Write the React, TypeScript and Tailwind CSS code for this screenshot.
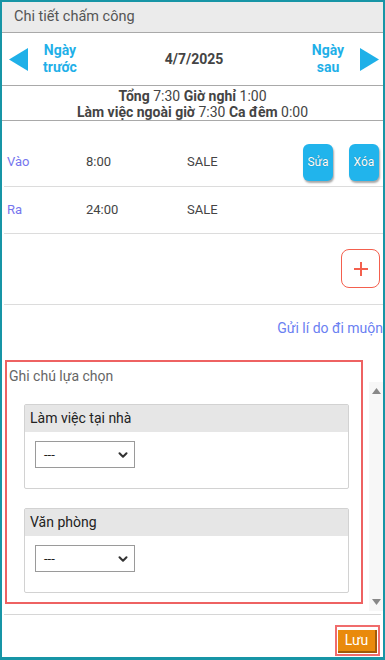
import { ChevronDown } from 'lucide-react';

const rows = [
  { kind: 'Vào', time: '8:00', dept: 'SALE', actions: true },
  { kind: 'Ra', time: '24:00', dept: 'SALE', actions: false },
];

const notes = ['Làm việc tại nhà', 'Văn phòng'];

function Triangle({ dir }: { dir: 'left' | 'right' }) {
  return (
    <svg width="19" height="23" viewBox="0 0 19 23">
      {dir === 'left' ? (
        <polygon points="19,0 19,23 0,11.5" fill="#1fb0e8" />
      ) : (
        <polygon points="0,0 0,23 19,11.5" fill="#1fb0e8" />
      )}
    </svg>
  );
}

function NoteCard({ title }: { title: string }) {
  return (
    <div className="ml-[17px] mr-[12px] border border-[#d2d2d2] rounded-[2px] bg-white">
      <div className="h-[27px] bg-[#e6e6e6] px-[5px] flex items-center text-[14px] text-[#222]">{title}</div>
      <div className="pl-[10px] pt-[9px] pb-[20px]">
        <div className="w-[100px] h-[27px] border border-[#9a9a9a] flex items-center justify-between pl-[8px] pr-[4px] text-[13px] text-[#222]">
          <span>---</span>
          <ChevronDown size={14} strokeWidth={3.5} className="text-[#333]" />
        </div>
      </div>
    </div>
  );
}

export default function App() {
  return (
    <div className="w-[385px] h-[660px] bg-white border-2 border-b-[3px] border-[#1795a6] font-['Roboto',sans-serif] flex flex-col overflow-hidden">
      {/* Header */}
      <div className="h-[31px] bg-[#ebebeb] border-b border-[#a9a9a9] flex items-center pl-[12px] text-[14.5px] text-[#555]">
        Chi tiết chấm công
      </div>

      {/* Day navigation */}
      <div className="h-[53px] border-b border-[#a9a9a9] flex items-center pl-[7px] pr-[4px]">
        <Triangle dir="left" />
        <div className="w-[64px] text-center text-[14px] font-bold leading-[17px] text-[#1fb0e8]">
          Ngày<br />trước
        </div>
        <div className="flex-1 text-center text-[14px] font-bold text-[#444]">4/7/2025</div>
        <div className="w-[64px] text-center text-[14px] font-bold leading-[17px] text-[#1fb0e8]">
          Ngày<br />sau
        </div>
        <Triangle dir="right" />
      </div>

      {/* Summary */}
      <div className="h-[35px] border-b border-[#a9a9a9] flex flex-col items-center justify-center text-[14px] leading-[16px] text-[#444] pt-[1px]">
        <div>
          <b>Tổng</b> 7:30 <b>Giờ nghỉ</b> 1:00
        </div>
        <div>
          <b>Làm việc ngoài giờ</b> 7:30 <b>Ca đêm</b> 0:00
        </div>
      </div>

      {/* Check in / out rows */}
      <div className="pl-[2px]">
        {rows.map((r) => (
          <div
            key={r.kind}
            className={`flex items-center border-b border-[#dcdcdc] text-[13px] ${r.actions ? 'h-[66px] pt-[17px]' : 'h-[47px]'}`}
          >
            <div className="w-[82px] pl-[3px] text-[#7676ee]">{r.kind}</div>
            <div className="w-[101px] text-[#444]">{r.time}</div>
            <div className="flex-1 text-[#444]">{r.dept}</div>
            {r.actions && (
              <div className="flex gap-[16px] pr-[4px]">
                <button className="w-[30px] h-[37px] rounded-[6px] bg-[#21b4ec] text-white text-[12px] shadow-[1px_2px_2px_rgba(0,0,0,0.35)] [text-shadow:0_0_1px_rgba(0,0,0,0.4)]">
                  Sửa
                </button>
                <button className="w-[30px] h-[37px] rounded-[6px] bg-[#21b4ec] text-white text-[12px] shadow-[1px_2px_2px_rgba(0,0,0,0.35)] [text-shadow:0_0_1px_rgba(0,0,0,0.4)]">
                  Xóa
                </button>
              </div>
            )}
          </div>
        ))}

        {/* Add */}
        <div className="h-[71px] border-b border-[#dcdcdc] flex justify-end items-start pt-[15px] pr-[3px]">
          <button className="w-[39px] h-[39px] rounded-[8px] border border-[#f4604e] flex items-center justify-center">
            <svg width="16" height="16" viewBox="0 0 16 16">
              <path d="M8 1v14M1 8h14" stroke="#f4604e" strokeWidth="2" />
            </svg>
          </button>
        </div>
      </div>

      {/* Late reason link */}
      <div className="h-[46px] flex items-center justify-end text-[14px] text-[#6a80f2] whitespace-nowrap">
        Gửi lí do đi muộn
      </div>

      {/* Notes section */}
      <div className="flex pl-[3px] mt-[9px]">
        <div className="w-[358px] h-[244px] border-2 border-[#ee6262] flex flex-col">
          <div className="pl-[2px] pt-[4px] text-[14px] text-[#666]">Ghi chú lựa chọn</div>
          <div className="mt-[17px] flex flex-col gap-[19px]">
            {notes.map((n) => (
              <NoteCard key={n} title={n} />
            ))}
          </div>
        </div>
        <div className="ml-[6px] mt-[22px] w-[14px] h-[229px] bg-[#f7f7f7] flex flex-col items-center justify-between py-[6px]">
          <svg width="9" height="6" viewBox="0 0 9 6">
            <polygon points="4.5,0 9,6 0,6" fill="#888" />
          </svg>
          <svg width="9" height="6" viewBox="0 0 9 6">
            <polygon points="0,0 9,0 4.5,6" fill="#888" />
          </svg>
        </div>
      </div>

      {/* Footer */}
      <div className="mt-[3px] mx-[2px] border-t border-[#d6d6d6] flex justify-end pt-[10px] pr-[1px]">
        <div className="border-2 border-[#f06c6c] p-[1px] bg-white">
          <button className="w-[39px] h-[23px] bg-[#e98a0c] text-white text-[14px] border-b-2 border-r-2 border-[#a25a08] leading-none">
            Lưu
          </button>
        </div>
      </div>
    </div>
  );
}
